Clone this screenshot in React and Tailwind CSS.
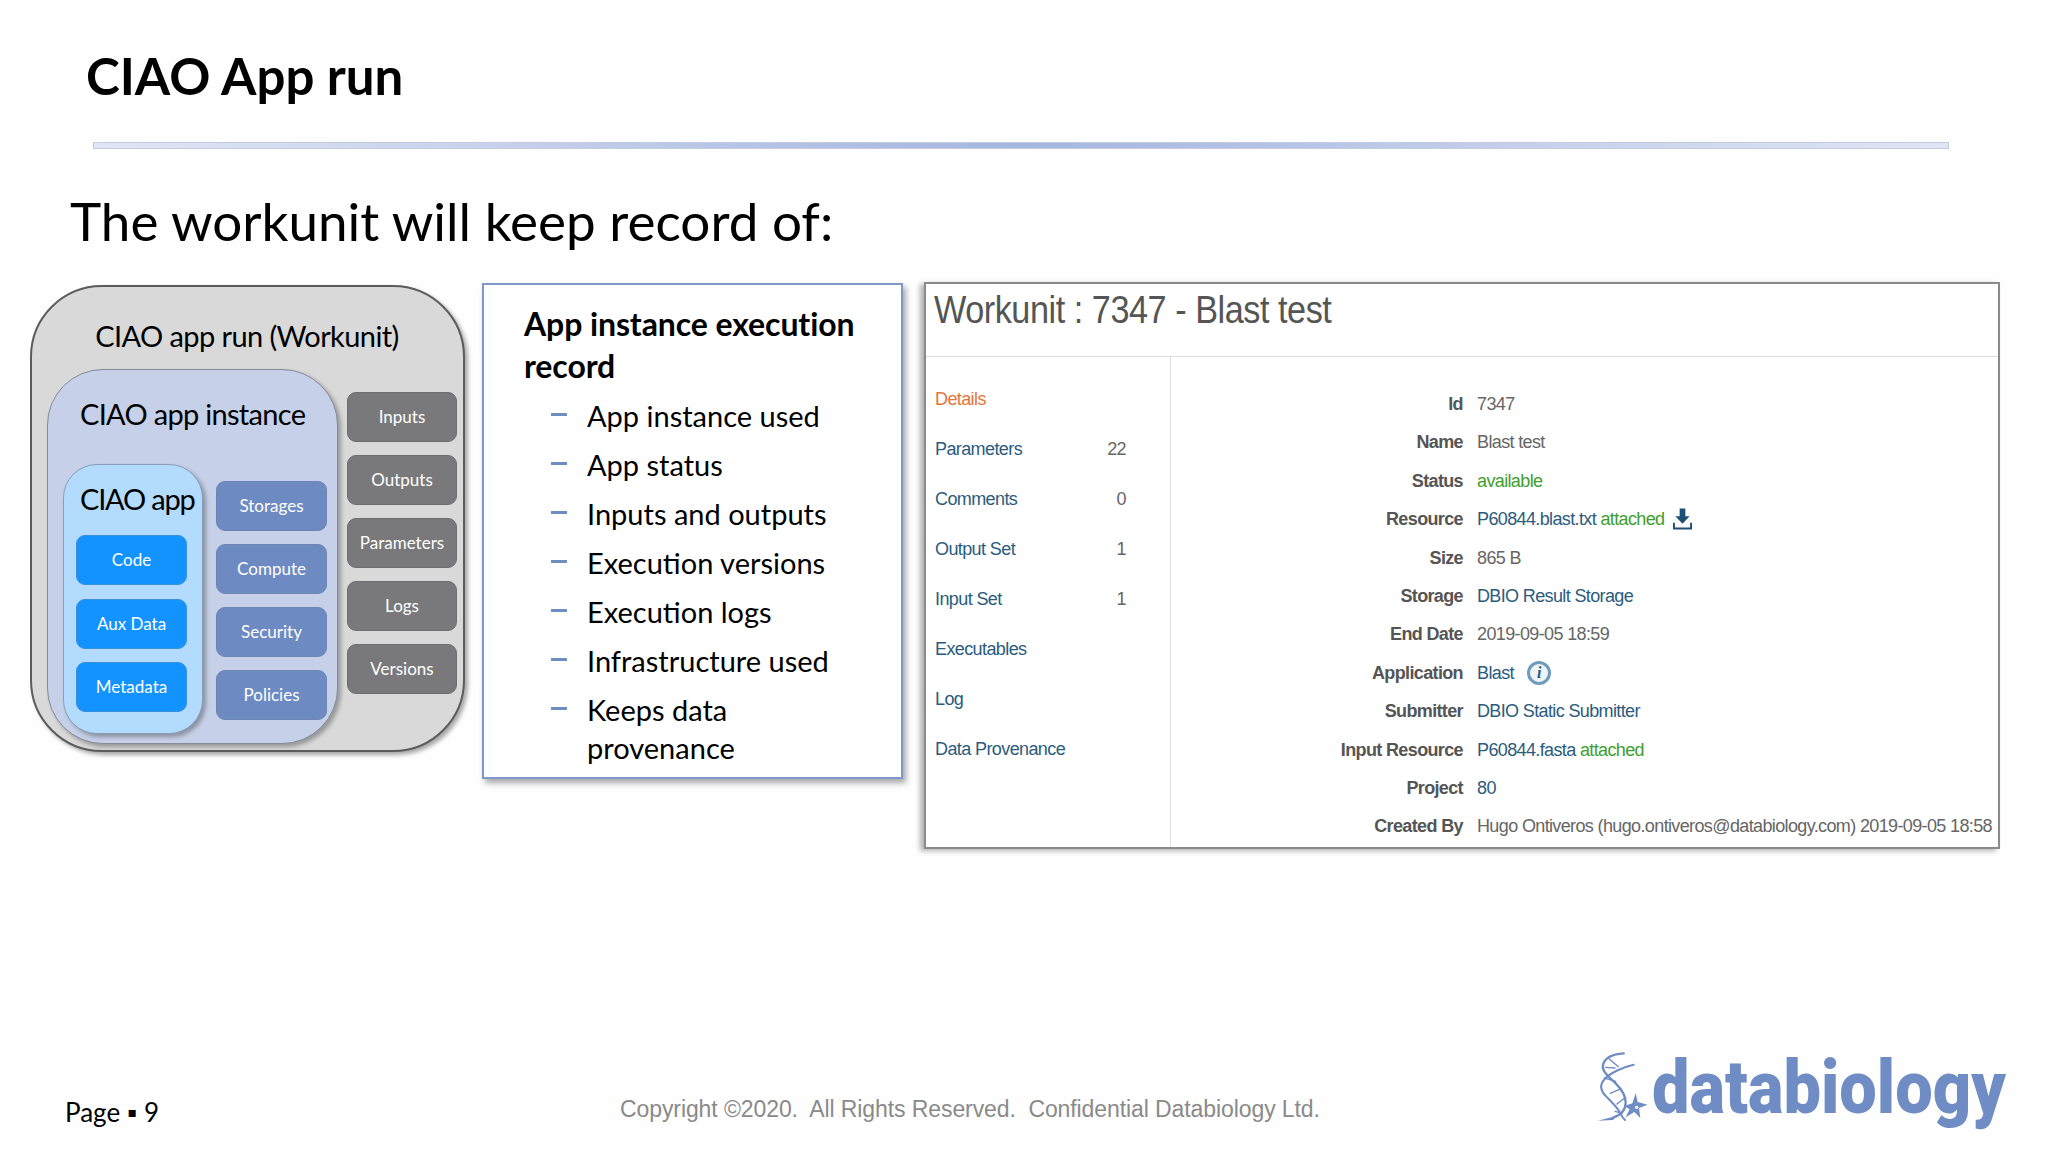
import React from 'react';

const grayItems = ['Inputs', 'Outputs', 'Parameters', 'Logs', 'Versions'];
const blueItems = ['Storages', 'Compute', 'Security', 'Policies'];
const appItems = ['Code', 'Aux Data', 'Metadata'];
const recordItems = [
  'App instance used',
  'App status',
  'Inputs and outputs',
  'Execution versions',
  'Execution logs',
  'Infrastructure used',
  'Keeps data provenance',
];
const sideItems = [
  ['Parameters', '22'],
  ['Comments', '0'],
  ['Output Set', '1'],
  ['Input Set', '1'],
  ['Executables', ''],
  ['Log', ''],
  ['Data Provenance', ''],
];

const DownloadIcon = () => (
  <svg viewBox="0 0 20 22" className="w-[19px] h-[22px] ml-[9px]" fill="#1c4f78">
    <path d="M7 0h6v8h4.500l-7.500 8-7.500-8H7z" />
    <path d="M0 15h2v5h16v-5h2v7H0z" />
  </svg>
);

const InfoIcon = () => (
  <span className="ml-[13px] w-[24px] h-[24px] rounded-full border-[3px] border-[#6f9cbc] bg-[#eef5f9] flex items-center justify-center italic font-bold text-[16px] leading-none text-[#2b5c7d] font-['Liberation_Serif',serif]">
    i
  </span>
);

const Helix = () => (
  <svg viewBox="10 20 174 225" className="w-[58px] h-[75px] shrink-0" fill="none" stroke="#6f8cc4" strokeLinecap="round">
    {/* strand one, top right round to bottom left */}
    <path d="M102 30C70 32 46 44 40 64c-5 20 18 36 38 56 16 16 30 36 30 58 0 22-14 36-36 44" strokeWidth="7" />
    <path d="M80 218L24 232l46-2z" fill="#6f8cc4" stroke="none" />
    {/* strand two */}
    <path d="M132 64C104 70 62 88 44 108c-16 18-12 34 6 52 16 16 34 32 42 50 5 10 10 16 14 20" strokeWidth="6" />
    {/* rungs */}
    <path d="M58 46l28 24M48 72l28 2M44 104l34 10M62 150l32-14M82 182l20-16M76 204l22 6" strokeWidth="4" />
    {/* neuron */}
    <path d="M138 150l6 26 30 8-26 10 4 30-18-18-26 16 12-24-16-10 24-8z" fill="#6f8cc4" stroke="none" />
    <circle cx="141" cy="192" r="5" fill="#ffffff" stroke="none" />
  </svg>
);

const App = () => {
  return (
    <div className="w-[2048px] min-h-[1152px] bg-[#fefefe] flex flex-col font-['Lato','Liberation_Sans',sans-serif] text-black overflow-hidden">
      <div className="h-[142px] pl-[86px] pt-[8px] flex items-center">
        <h1 className="text-[51px] font-bold leading-none">CIAO App run</h1>
      </div>
      <div className="mx-[93px] w-[1856px] h-[7px] border border-[#c3cbe0] bg-gradient-to-r from-[#e0e6f5] via-[#a5b6df] to-[#e0e6f5]" />
      <div className="pl-[70px] h-[134px] pt-[8px] flex items-center">
        <h2 className="text-[53px] leading-none">The workunit will keep record of:</h2>
      </div>

      <div className="pl-[30px] flex items-start">
        {/* diagram */}
        <div className="w-[435px] h-[467px] mt-[2px] rounded-[72px] border-2 border-[#5c5c5c] bg-[#d9d9d9] shadow-[3px_3px_4px_rgba(0,0,0,0.35)] pl-[15px] flex flex-col">
          <div className="h-[82px] flex items-center justify-center pr-[16px] pt-[14px] text-[29px] tracking-[-0.6px] leading-none whitespace-nowrap">
            CIAO app run (Workunit)
          </div>
          <div className="flex items-start gap-[9px]">
            <div className="w-[291px] h-[375px] rounded-[56px] border border-[#858b99] bg-[#c6d0e8] shadow-[3px_3px_4px_rgba(0,0,0,0.3)] pl-[15px] flex flex-col">
              <div className="h-[94px] flex items-center pl-[17px] pb-[8px] text-[29px] tracking-[-0.7px] leading-none whitespace-nowrap">
                CIAO app instance
              </div>
              <div className="flex items-start gap-[13px]">
                <div className="w-[140px] h-[270px] rounded-[34px] border border-[#8c9db5] bg-[#b3dbfe] shadow-[3px_3px_4px_rgba(0,0,0,0.3)] pl-[12px] flex flex-col">
                  <div className="h-[70px] flex items-center pl-[4px] pb-[4px] text-[29px] tracking-[-1.200px] leading-none whitespace-nowrap">
                    CIAO app
                  </div>
                  <div className="flex flex-col gap-[13.500px]">
                    {appItems.map((item) => (
                      <div key={item} className="w-[111px] h-[50px] rounded-[9px] border border-[#3a8fd8] bg-[#1293ff] text-white text-[17px] flex items-center justify-center">
                        {item}
                      </div>
                    ))}
                  </div>
                </div>
                <div className="mt-[17px] flex flex-col gap-[13px]">
                  {blueItems.map((item) => (
                    <div key={item} className="w-[111px] h-[50px] rounded-[9px] border border-[#6d86b5] bg-[#6e8ac2] text-white text-[17px] flex items-center justify-center">
                      {item}
                    </div>
                  ))}
                </div>
              </div>
            </div>
            <div className="mt-[23px] flex flex-col gap-[13px]">
              {grayItems.map((item) => (
                <div key={item} className="w-[110px] h-[50px] rounded-[9px] border border-[#6e6e70] bg-[#79797b] text-white text-[17px] flex items-center justify-center">
                  {item}
                </div>
              ))}
            </div>
          </div>
        </div>

        {/* record list */}
        <div className="ml-[17px] w-[421px] h-[496px] border-2 border-[#7f97c9] bg-white shadow-[3px_4px_6px_rgba(0,0,0,0.35)] pl-[40px] pt-[18px]">
          <h3 className="text-[32px] font-bold leading-[42px] tracking-[-0.1px]">App instance execution record</h3>
          <ul className="mt-[10px] flex flex-col gap-[11px]">
            {recordItems.map((item) => (
              <li key={item} className="flex text-[29px] leading-[38px]">
                <span className="w-[16px] h-[3px] mt-[16px] ml-[27px] mr-[20px] shrink-0 bg-[#6f8cc4]" />
                <span className="w-[260px]">{item}</span>
              </li>
            ))}
          </ul>
        </div>

        {/* workunit screenshot */}
        <div className="ml-[21px] w-[1076px] h-[567px] -mt-[1px] border-2 border-[#8a8a8a] bg-white shadow-[-4px_2px_5px_rgba(0,0,0,0.3)] flex flex-col font-['Liberation_Sans',sans-serif]">
          <div className="h-[73px] pl-[8px] pb-[20px] border-b border-[#dddddd] flex items-center text-[38px] leading-none text-[#555555] tracking-[-0.5px] whitespace-nowrap">
            <span className="scale-x-90 origin-left">Workunit : 7347 - Blast test</span>
          </div>
          <div className="flex flex-1">
            <div className="w-[245px] border-r border-[#dddddd] pl-[9px] pr-[44px] pt-[17px] flex flex-col text-[18px] leading-[50px] tracking-[-0.6px]">
              <div className="text-[#e8743b]">Details</div>
              {sideItems.map(([label, count]) => (
                <div key={label} className="flex justify-between text-[#2b5c7d]">
                  <span>{label}</span>
                  <span className="text-[#666666]">{count}</span>
                </div>
              ))}
            </div>
            <div className="flex-1 pt-[28px] grid grid-cols-[292px_1fr] gap-x-[14px] auto-rows-[38.400px] text-[18px] leading-[38px] tracking-[-0.63px] whitespace-nowrap">
              <div className="text-right font-bold text-[#555555]">Id</div>
              <div className="text-[#666666]">7347</div>
              <div className="text-right font-bold text-[#555555]">Name</div>
              <div className="text-[#666666]">Blast test</div>
              <div className="text-right font-bold text-[#555555]">Status</div>
              <div className="text-[#3f9e2f]">available</div>
              <div className="text-right font-bold text-[#555555]">Resource</div>
              <div className="flex items-center text-[#2b5c7d]">
                P60844.blast.txt&nbsp;<span className="text-[#3f9e2f]">attached</span>
                <DownloadIcon />
              </div>
              <div className="text-right font-bold text-[#555555]">Size</div>
              <div className="text-[#666666]">865 B</div>
              <div className="text-right font-bold text-[#555555]">Storage</div>
              <div className="text-[#2b5c7d]">DBIO Result Storage</div>
              <div className="text-right font-bold text-[#555555]">End Date</div>
              <div className="text-[#666666]">2019-09-05 18:59</div>
              <div className="text-right font-bold text-[#555555]">Application</div>
              <div className="flex items-center text-[#2b5c7d]">
                Blast
                <InfoIcon />
              </div>
              <div className="text-right font-bold text-[#555555]">Submitter</div>
              <div className="text-[#2b5c7d]">DBIO Static Submitter</div>
              <div className="text-right font-bold text-[#555555]">Input Resource</div>
              <div className="text-[#2b5c7d]">
                P60844.fasta&nbsp;<span className="text-[#3f9e2f]">attached</span>
              </div>
              <div className="text-right font-bold text-[#555555]">Project</div>
              <div className="text-[#2b5c7d]">80</div>
              <div className="text-right font-bold text-[#555555]">Created By</div>
              <div className="text-[#666666]">Hugo Ontiveros (hugo.ontiveros@databiology.com) 2019-09-05 18:58</div>
            </div>
          </div>
        </div>
      </div>

      <div className="mt-auto h-[96px] pl-[65px] flex items-center">
        <div className="w-[555px] pt-[16px] text-[26px] leading-none">Page ▪ 9</div>
        <div className="w-[973px] pt-[10px] text-[23px] leading-none tracking-[-0.09px] text-[#8a8a8a] font-['Liberation_Sans',sans-serif] whitespace-nowrap">
          Copyright ©2020.&nbsp; All Rights Reserved.&nbsp; Confidential Databiology Ltd.
        </div>
        <div className="flex items-center pb-[33px]">
          <Helix />
          <div className="w-[354px] ml-[1px] text-[75px] leading-none font-black text-[#6f8cc4] font-['Roboto',sans-serif] whitespace-nowrap">
            <span className="inline-block scale-x-[0.89] origin-left">databiology</span>
          </div>
        </div>
      </div>
    </div>
  );
};

export default App;
